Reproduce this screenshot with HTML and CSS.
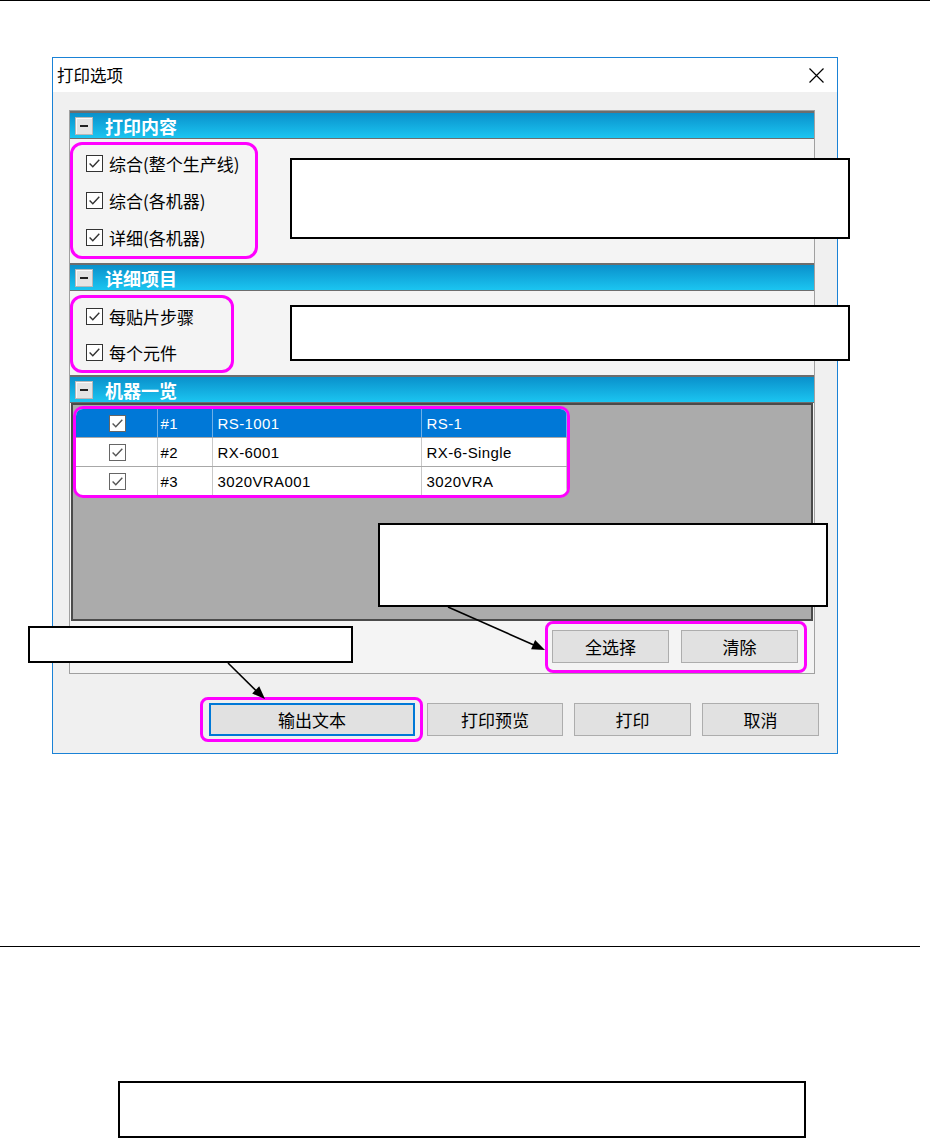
FILE: index.html
```html
<!DOCTYPE html>
<html lang="zh-CN">
<head>
<meta charset="utf-8">
<title>打印选项</title>
<link rel="stylesheet" href="styles.css">
</head>
<body>
<div class="page">
  <div class="rule rule-top"></div>

  <div class="dialog">
    <div class="titlebar">
      <span class="title">打印选项</span>
      <svg class="close" width="15" height="15" viewBox="0 0 15 15"><path d="M0.5 0.5 L14.5 14.5 M14.5 0.5 L0.5 14.5" stroke="#000" stroke-width="1.2" fill="none"/></svg>
    </div>
    <div class="dlg-body">
      <div class="panel">
        <div class="sec-head"><span class="minus"></span><span>打印内容</span></div>
        <div class="sec-body sec1">
          <div class="hl hl-c1">
            <div class="check-row"><svg class="cb" width="17" height="17" viewBox="0 0 17 17"><rect x="0.5" y="0.5" width="16" height="16" fill="#fff" stroke="#333"/><path d="M3.6 8.6 L6.8 11.8 L13.3 4.8" fill="none" stroke="#333" stroke-width="1.4"/></svg><span>综合(整个生产线)</span></div>
            <div class="check-row"><svg class="cb" width="17" height="17" viewBox="0 0 17 17"><rect x="0.5" y="0.5" width="16" height="16" fill="#fff" stroke="#333"/><path d="M3.6 8.6 L6.8 11.8 L13.3 4.8" fill="none" stroke="#333" stroke-width="1.4"/></svg><span>综合(各机器)</span></div>
            <div class="check-row"><svg class="cb" width="17" height="17" viewBox="0 0 17 17"><rect x="0.5" y="0.5" width="16" height="16" fill="#fff" stroke="#333"/><path d="M3.6 8.6 L6.8 11.8 L13.3 4.8" fill="none" stroke="#333" stroke-width="1.4"/></svg><span>详细(各机器)</span></div>
          </div>
        </div>
        <div class="sec-head"><span class="minus"></span><span>详细项目</span></div>
        <div class="sec-body sec2">
          <div class="hl hl-c2">
            <div class="check-row"><svg class="cb" width="17" height="17" viewBox="0 0 17 17"><rect x="0.5" y="0.5" width="16" height="16" fill="#fff" stroke="#333"/><path d="M3.6 8.6 L6.8 11.8 L13.3 4.8" fill="none" stroke="#333" stroke-width="1.4"/></svg><span>每贴片步骤</span></div>
            <div class="check-row"><svg class="cb" width="17" height="17" viewBox="0 0 17 17"><rect x="0.5" y="0.5" width="16" height="16" fill="#fff" stroke="#333"/><path d="M3.6 8.6 L6.8 11.8 L13.3 4.8" fill="none" stroke="#333" stroke-width="1.4"/></svg><span>每个元件</span></div>
          </div>
        </div>
        <div class="sec-head"><span class="minus"></span><span>机器一览</span></div>
        <div class="grid">
          <div class="hl hl-table">
            <table>
              <colgroup><col class="c1"><col class="c2"><col class="c3"><col></colgroup>
              <tr class="sel">
                <td class="cbcell"><svg width="17" height="17" viewBox="0 0 17 17"><rect x="0.5" y="0.5" width="16" height="16" fill="#fff" stroke="#666"/><path d="M3.6 8.6 L6.8 11.8 L13.3 4.8" fill="none" stroke="#555" stroke-width="1.4"/></svg></td>
                <td>#1</td><td class="pad">RS-1001</td><td class="pad">RS-1</td>
              </tr>
              <tr>
                <td class="cbcell"><svg width="17" height="17" viewBox="0 0 17 17"><rect x="0.5" y="0.5" width="16" height="16" fill="#fff" stroke="#666"/><path d="M3.6 8.6 L6.8 11.8 L13.3 4.8" fill="none" stroke="#555" stroke-width="1.4"/></svg></td>
                <td>#2</td><td class="pad">RX-6001</td><td class="pad">RX-6-Single</td>
              </tr>
              <tr class="last">
                <td class="cbcell"><svg width="17" height="17" viewBox="0 0 17 17"><rect x="0.5" y="0.5" width="16" height="16" fill="#fff" stroke="#666"/><path d="M3.6 8.6 L6.8 11.8 L13.3 4.8" fill="none" stroke="#555" stroke-width="1.4"/></svg></td>
                <td>#3</td><td class="pad">3020VRA001</td><td class="pad">3020VRA</td>
              </tr>
            </table>
          </div>
        </div>
        <div class="grid-actions">
          <div class="hl hl-btns">
            <button class="btn btn-sm">全选择</button>
            <button class="btn btn-sm">清除</button>
          </div>
        </div>
      </div>
      <div class="dlg-actions">
        <div class="hl hl-main"><button class="btn btn-focus">输出文本</button></div>
        <button class="btn btn-preview">打印预览</button>
        <button class="btn btn-print">打印</button>
        <button class="btn btn-cancel">取消</button>
      </div>
    </div>
  </div>

  <div class="rule rule-mid"></div>
  <div class="note-bottom"></div>

  <div class="note note-a"></div>
  <div class="note note-b"></div>
  <div class="note note-c"></div>
  <div class="note note-d"></div>

  <svg class="arrows" width="946" height="1138" viewBox="0 0 946 1138">
    <line x1="448" y1="607" x2="535" y2="645.5" stroke="#000" stroke-width="1.6"/>
    <polygon points="545,650 531.1,649.3 535.1,640.1" fill="#000"/>
    <line x1="228" y1="663" x2="257" y2="691.5" stroke="#000" stroke-width="1.6"/>
    <polygon points="265,699 252.2,693.5 259.2,686.3" fill="#000"/>
  </svg>
</div>
</body>
</html>
```

FILE: styles.css
```css
body {
  margin: 0;
  background: #fff;
  font-family: "Noto Sans CJK SC", "Noto Sans", sans-serif;
  color: #000;
}

.page {
  position: relative;
  width: 946px;
  height: 1138px;
  overflow: hidden;
}

.rule {
  height: 1px;
  background: #000;
}

.rule-top {
  width: 930px;
}

.rule-mid {
  width: 920px;
  margin-top: 192px;
}

.note-bottom {
  box-sizing: border-box;
  margin: 134px 0 0 118px;
  width: 688px;
  height: 57px;
  border: 2px solid #000;
  background: #fff;
}

/* dialog */
.dialog {
  box-sizing: border-box;
  width: 786px;
  height: 697px;
  margin: 56px 0 0 52px;
  border: 1px solid #1a82d6;
  background: #f0f0f0;
}

.titlebar {
  height: 34px;
  background: #fff;
  display: flex;
  align-items: center;
  justify-content: space-between;
  padding: 0 13px 0 4px;
}

.title {
  font-size: 16.5px;
  line-height: 1;
}

.dlg-body {
  padding: 18px 18px 0 16px;
}

.panel {
  margin-right: 4px;
  border: 1px solid #a0a0a0;
  background: #f4f4f4;
}

.sec-head {
  height: 25px;
  border-top: 2px solid #6d6d6d;
  border-bottom: 1px solid #6d6d6d;
  background: linear-gradient(#0a90cb, #1bc5f1);
  display: flex;
  align-items: center;
  gap: 12px;
  padding-left: 5px;
  color: #fff;
  font-weight: bold;
  font-size: 18px;
  line-height: 1;
}

.minus {
  box-sizing: border-box;
  width: 18px;
  height: 18px;
  background: #e4e4e4;
  border: 1px solid #b8b8b8;
  box-shadow: inset 1px 1px 0 #fafafa;
  display: flex;
  align-items: center;
  justify-content: center;
}

.minus::before {
  content: "";
  width: 8px;
  height: 2px;
  background: #222;
}

.sec-body {
  box-sizing: border-box;
}

.sec1 {
  height: 124px;
  padding-top: 3px;
}

.sec2 {
  height: 84px;
  padding-top: 4px;
}

.hl {
  box-sizing: border-box;
  border: 3px solid #ff00ff;
  border-radius: 12px;
}

.hl-c1 {
  width: 188px;
}

.hl-c2 {
  width: 164px;
}

.check-row {
  height: 37px;
  display: flex;
  align-items: center;
  gap: 6px;
  padding-left: 13px;
  font-size: 17px;
}

.sec2 .check-row {
  height: 36px;
}

.cb {
  flex: none;
}

/* grid */
.grid {
  box-sizing: border-box;
  height: 218px;
  margin: 0 1px;
  border: 2px solid #4a4a4a;
  background: #ababab;
  padding-top: 1px;
}

.hl-table {
  width: 497px;
  border-radius: 10px;
  overflow: hidden;
  background: #fff;
}

table {
  width: 100%;
  border-collapse: collapse;
  font-family: "Liberation Sans", Arial, sans-serif;
  font-size: 15px;
  letter-spacing: 0.4px;
}

col.c1 { width: 81px; }
col.c2 { width: 55px; }
col.c3 { width: 209px; }

td {
  height: 28px;
  padding: 0 0 0 3px;
  border-right: 1px solid #c8c8c8;
  border-bottom: 1px solid #a8a8a8;
  white-space: nowrap;
}

td.pad {
  padding-left: 5px;
}

tr.last td {
  border-bottom: none;
}

td.cbcell {
  text-align: center;
  padding: 0 0 0 3px;
}

td.cbcell svg {
  display: block;
  margin: 0 auto;
}

tr.sel td {
  background: #0078d7;
  color: #fff;
  border-right-color: #6fb0e8;
}

.grid-actions {
  height: 52px;
  display: flex;
  justify-content: flex-end;
  padding-right: 7px;
}

.hl-btns {
  display: flex;
  gap: 12px;
  height: 52px;
  padding: 6px 6px 0 4px;
  border-radius: 8px;
}

.btn {
  box-sizing: border-box;
  height: 33px;
  padding: 0;
  background: #e1e1e1;
  border: 1px solid #adadad;
  font-family: "Noto Sans CJK SC", "Noto Sans", sans-serif;
  font-size: 17px;
  color: #000;
}

.btn-sm {
  width: 117px;
}

.dlg-actions {
  margin-top: 23px;
  display: flex;
  justify-content: flex-end;
  align-items: center;
}

.hl-main {
  display: flex;
  padding: 3px 5px 3px 6px;
  border-radius: 8px;
  margin-right: 4px;
}

.btn-focus {
  width: 206px;
  border: 2px solid #0078d7;
}

.btn-preview {
  width: 136px;
  margin-right: 11px;
}

.btn-print {
  width: 117px;
  margin-right: 11px;
}

.btn-cancel {
  width: 117px;
}

/* callout annotations over the screenshot */
.note {
  position: absolute;
  box-sizing: border-box;
  background: #fff;
  border: 2px solid #000;
}

.note-a { left: 290px; top: 158px; width: 560px; height: 81px; }
.note-b { left: 290px; top: 305px; width: 560px; height: 56px; }
.note-c { left: 378px; top: 523px; width: 450px; height: 84px; }
.note-d { left: 28px; top: 626px; width: 325px; height: 37px; }

.arrows {
  position: absolute;
  left: 0;
  top: 0;
  pointer-events: none;
}
```
